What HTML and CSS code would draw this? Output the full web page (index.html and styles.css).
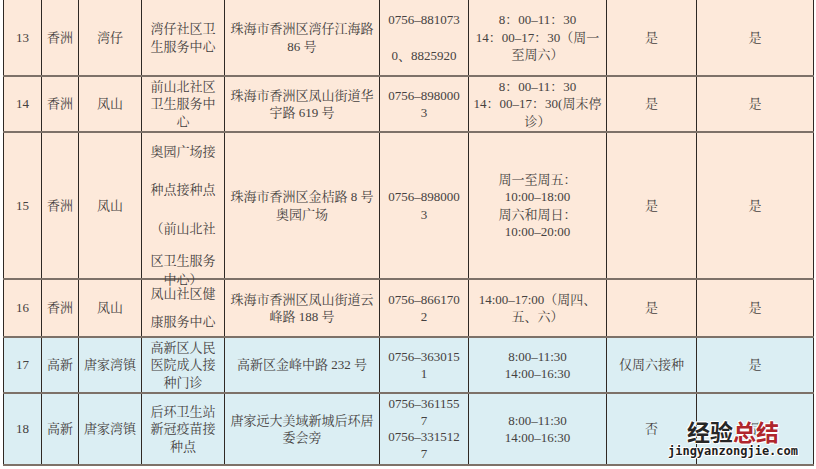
FILE: index.html
```html
<!DOCTYPE html>
<html lang="zh">
<head>
<meta charset="utf-8">
<link rel="stylesheet" href="styles.css">
</head>
<body>
<div class="page">
<table class="sites">
<colgroup>
<col class="c1"><col class="c2"><col class="c3"><col class="c4"><col class="c5"><col class="c6"><col class="c7"><col class="c8"><col class="c9">
</colgroup>
<tbody>
<tr class="peach r13">
<td>13</td><td>香洲</td><td>湾仔</td>
<td>湾仔社区卫<br>生服务中心</td>
<td>珠海市香洲区湾仔江海路<br>86 号</td>
<td class="wide">0756–881073<br>0、8825920</td>
<td>8：00–11：30<br>14：00–17：30（周一<br>至周六）</td>
<td>是</td><td>是</td>
</tr>
<tr class="peach r14">
<td>14</td><td>香洲</td><td>凤山</td>
<td>前山北社区<br>卫生服务中<br>心</td>
<td>珠海市香洲区凤山街道华<br>宇路 619 号</td>
<td>0756–898000<br>3</td>
<td>8：00–11：30<br>14：00–17：30(周末停<br>诊）</td>
<td>是</td><td>是</td>
</tr>
<tr class="peach r15">
<td>15</td><td>香洲</td><td>凤山</td>
<td class="top"><div class="tall"><p class="l1">奥园广场接</p><p class="l2">种点接种点</p><p class="l3">（前山北社</p><p class="l4">区卫生服务<br>中心）</p></div></td>
<td>珠海市香洲区金桔路 8 号<br>奥园广场</td>
<td>0756–898000<br>3</td>
<td>周一至周五：<br>10:00–18:00<br>周六和周日：<br>10:00–20:00</td>
<td>是</td><td>是</td>
</tr>
<tr class="peach r16">
<td>16</td><td>香洲</td><td>凤山</td>
<td class="loose">凤山社区健<br>康服务中心</td>
<td>珠海市香洲区凤山街道云<br>峰路 188 号</td>
<td>0756–866170<br>2</td>
<td>14:00–17:00（周四、<br>五、六）</td>
<td>是</td><td>是</td>
</tr>
<tr class="blue r17">
<td>17</td><td>高新</td><td>唐家湾镇</td>
<td>高新区人民<br>医院成人接<br>种门诊</td>
<td>高新区金峰中路 232 号</td>
<td>0756–363015<br>1</td>
<td>8:00–11:30<br>14:00–16:30</td>
<td>仅周六接种</td><td>是</td>
</tr>
<tr class="blue r18">
<td>18</td><td>高新</td><td>唐家湾镇</td>
<td>后环卫生站<br>新冠疫苗接<br>种点</td>
<td>唐家远大美域新城后环居<br>委会旁</td>
<td class="tight">0756–361155<br>7<br>0756–331512<br>7</td>
<td>8:00–11:30<br>14:00–16:30</td>
<td>否</td><td>是</td>
</tr>
</tbody>
</table>
<div class="mark">
<div class="mark-cn"><span class="dark">经验</span><span class="red">总结</span></div>
<div class="mark-url">jingyanzongjie.com</div>
</div>
</div>
</body>
</html>
```

FILE: styles.css
```css
html, body {
  margin: 0;
  padding: 0;
  background: #ffffff;
}

.page {
  position: relative;
  width: 816px;
  height: 469px;
  overflow: hidden;
}

.sites {
  margin-left: 3px;
  width: 810px;
  border-collapse: collapse;
  table-layout: fixed;
  font-family: "Liberation Serif", "Noto Serif CJK SC", "Noto Sans CJK SC", serif;
  font-size: 13px;
  line-height: 17.5px;
  color: #454140;
}

.c1 { width: 38px; }
.c2 { width: 37px; }
.c3 { width: 63px; }
.c4 { width: 83px; }
.c5 { width: 155px; }
.c6 { width: 89px; }
.c7 { width: 138px; }
.c8 { width: 90px; }
.c9 { width: 117px; }

.sites td {
  padding: 0;
  text-align: center;
  vertical-align: middle;
  border-left: 1px solid #2f2824;
  border-right: 1px solid #2f2824;
  border-bottom: 2px solid #7d7168;
  white-space: nowrap;
}

.peach td { background: #fde9da; }
.blue td { background: #dbeef3; }

.r13 { height: 76px; }
.r14 { height: 56px; }
.r15 { height: 147px; }
.r16 { height: 55px; }
.r17 { height: 56px; }
.r18 { height: 72px; }

.sites td.wide { line-height: 36px; }
.sites td.loose { line-height: 28px; padding-top: 0; }
.sites td.tight { line-height: 16.5px; }
.sites td.top { vertical-align: top; }

.tall {
  height: 139px;
  padding-top: 9px;
  box-sizing: border-box;
  overflow: visible;
}

.tall p {
  margin: 0;
  line-height: 19px;
}

.tall .l1 { margin-bottom: 19px; }
.tall .l2 { margin-bottom: 19.5px; }
.tall .l3 { margin-bottom: 13.5px; }
.tall .l4 { line-height: 19px; }

.mark {
  position: absolute;
  left: 664px;
  top: 418px;
  width: 138px;
  text-align: center;
}

.mark-cn {
  font-family: "Noto Sans CJK SC", sans-serif;
  font-weight: 700;
  font-size: 23px;
  line-height: 26px;
  text-shadow: 1px 0 0 #fff, -1px 0 0 #fff, 0 1px 0 #fff, 0 -1px 0 #fff, 1px 1px 0 #fff, -1px -1px 0 #fff;
}

.mark-cn .dark { color: #262626; }
.mark-cn .red { color: #b0262c; }

.mark-url {
  font-family: "DejaVu Sans Mono", monospace;
  font-weight: 700;
  font-size: 12px;
  line-height: 14px;
  color: #1e1e1e;
  text-shadow: 1px 0 0 #fff, -1px 0 0 #fff, 0 1px 0 #fff, 0 -1px 0 #fff, 1px 1px 0 #fff, -1px -1px 0 #fff;
}
```
